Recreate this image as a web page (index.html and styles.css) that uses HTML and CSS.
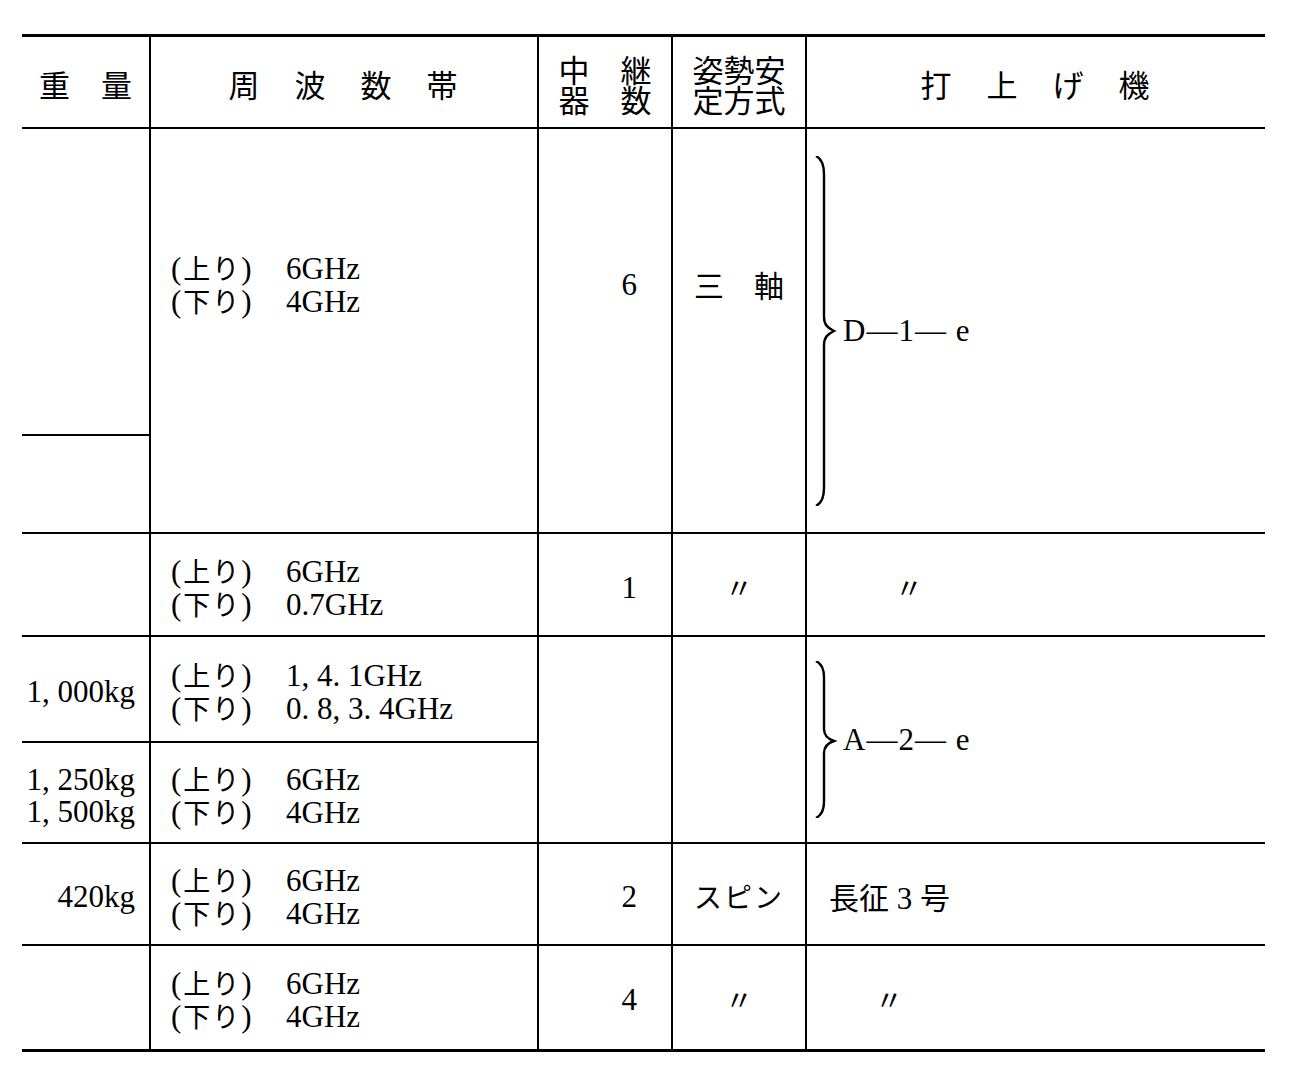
FILE: index.html
```html
<!DOCTYPE html>
<html lang="ja">
<head>
<meta charset="utf-8">
<title>衛星諸元</title>
<link rel="stylesheet" href="styles.css">
</head>
<body>
<table class="spec">
  <colgroup>
    <col class="c-w"><col class="c-f"><col class="c-n"><col class="c-a"><col class="c-l">
  </colgroup>
  <tr class="head">
    <th class="h-w">重　量</th>
    <th class="h-f">周　波　数　帯</th>
    <th class="h-n"><span class="hl">中　継</span><span class="hl">器　数</span></th>
    <th class="h-a"><span class="hl">姿勢安</span><span class="hl">定方式</span></th>
    <th class="h-l">打　上　げ　機</th>
  </tr>
  <tr class="r1a">
    <td class="w split"></td>
    <td class="f nob"><span class="lbl">(<span class="jp">上り</span>)</span>6GHz<br><span class="lbl">(<span class="jp">下り</span>)</span>4GHz</td>
    <td class="n nob">6</td>
    <td class="a nob"><span class="jp big">三　軸</span></td>
    <td class="l" rowspan="2">
      <div class="brace-wrap">
        <svg class="brace" width="24" height="350" viewBox="0 0 24 350"><path d="M3,0 C9,3 11,9 11,18 L11,161 C11,169 15,172 21,175 C15,178 11,181 11,189 L11,332 C11,341 9,347 3,350" fill="none" stroke="#000" stroke-width="2.4"/></svg>
        <span class="code">D—1— e</span>
      </div>
    </td>
  </tr>
  <tr class="r1b">
    <td class="w"></td>
    <td class="f not"></td>
    <td class="n not"></td>
    <td class="a not"></td>
  </tr>
  <tr class="r2">
    <td class="w"></td>
    <td class="f"><span class="lbl">(<span class="jp">上り</span>)</span>6GHz<br><span class="lbl">(<span class="jp">下り</span>)</span>0.7GHz</td>
    <td class="n">1</td>
    <td class="a"><span class="jp ditto">〃</span></td>
    <td class="l"><span class="jp ditto d1">〃</span></td>
  </tr>
  <tr class="r3a">
    <td class="w">1, 000kg</td>
    <td class="f"><span class="lbl">(<span class="jp">上り</span>)</span>1, 4. 1GHz<br><span class="lbl">(<span class="jp">下り</span>)</span>0. 8, 3. 4GHz</td>
    <td class="n" rowspan="2"></td>
    <td class="a" rowspan="2"></td>
    <td class="l" rowspan="2">
      <div class="brace-wrap">
        <svg class="brace" width="24" height="157" viewBox="0 0 24 157"><path d="M3,0 C9,3 11,8 11,16 L11,68 C11,75 15,78 21,80 C15,82 11,85 11,92 L11,141 C11,149 9,154 3,157" fill="none" stroke="#000" stroke-width="2.4"/></svg>
        <span class="code">A—2— e</span>
      </div>
    </td>
  </tr>
  <tr class="r3b">
    <td class="w">1, 250kg<br>1, 500kg</td>
    <td class="f"><span class="lbl">(<span class="jp">上り</span>)</span>6GHz<br><span class="lbl">(<span class="jp">下り</span>)</span>4GHz</td>
  </tr>
  <tr class="r4">
    <td class="w">420kg</td>
    <td class="f"><span class="lbl">(<span class="jp">上り</span>)</span>6GHz<br><span class="lbl">(<span class="jp">下り</span>)</span>4GHz</td>
    <td class="n">2</td>
    <td class="a"><span class="jp spin">スピン</span></td>
    <td class="l"><span class="lv"><span class="jp big">長征</span> 3 <span class="jp big">号</span></span></td>
  </tr>
  <tr class="r5">
    <td class="w"></td>
    <td class="f"><span class="lbl">(<span class="jp">上り</span>)</span>6GHz<br><span class="lbl">(<span class="jp">下り</span>)</span>4GHz</td>
    <td class="n">4</td>
    <td class="a"><span class="jp ditto">〃</span></td>
    <td class="l"><span class="jp ditto d2">〃</span></td>
  </tr>
</table>
</body>
</html>
```

FILE: styles.css
```css
html, body {
  margin: 0;
  padding: 0;
  background: #fff;
}
body {
  color: #000;
  font-family: "Liberation Serif", "Noto Sans CJK JP", serif;
}
.spec {
  margin: 34px 0 0 22px;
  width: 1243px;
  border-collapse: collapse;
  table-layout: fixed;
  font-size: 31px;
  line-height: 32px;
}
.c-w { width: 128px; }
.c-f { width: 388px; }
.c-n { width: 134px; }
.c-a { width: 134px; }
.c-l { width: 459px; }

.spec th, .spec td {
  padding: 0;
  border-left: 2px solid #000;
  border-top: 2px solid #000;
  vertical-align: middle;
  white-space: nowrap;
}
.spec td {
  padding-top: 6px;
}
.spec th:first-child, .spec td.w {
  border-left: none;
}
.head th {
  border-top: 3px solid #000;
  height: 87px;
  padding-top: 3px;
  font-family: "Noto Sans CJK JP", sans-serif;
  font-weight: 400;
  font-size: 31px;
  line-height: 31px;
  text-align: center;
}
.hl {
  display: block;
  height: 30px;
  line-height: 30px;
}
.h-f, .h-l { letter-spacing: 2px; }

.jp {
  font-family: "Noto Sans CJK JP", sans-serif;
  font-size: 27px;
}
.big { font-size: 30px; }
.lbl {
  display: inline-block;
  width: 115px;
  letter-spacing: 2px;
}
.w {
  text-align: right;
  padding-right: 14px !important;
}
.f {
  padding-left: 20px !important;
  text-align: left;
}
.n {
  text-align: right;
  padding-right: 34px !important;
}
.a {
  text-align: center;
}
.l {
  text-align: left;
  padding-left: 6px !important;
}
.spec td.l[rowspan] {
  padding-top: 0;
}
.spin { letter-spacing: 2px; font-size: 28px; }

.r1a { height: 307px; }
.r1b { height: 98px; }
.r1a td.nob { border-bottom: none; }
.r1b td.not { border-top: none; }
.r1a td.split { border-bottom: 2px solid #000; }
.r1b td.w { border-top: 2px solid #000; }
.r2 { height: 103px; }
.r3a { height: 106px; }
.r3b { height: 101px; }
.r4 { height: 102px; }
.r5 { height: 105px; }
.r5 td { border-bottom: 3px solid #000; }

.brace-wrap {
  display: flex;
  align-items: center;
  gap: 6px;
}
.brace { display: block; flex: none; }
.code { letter-spacing: 1px; }
.ditto { font-size: 28px; }
.d1 { padding-left: 82px; }
.d2 { padding-left: 62px; }
.lv { padding-left: 16px; }
```
